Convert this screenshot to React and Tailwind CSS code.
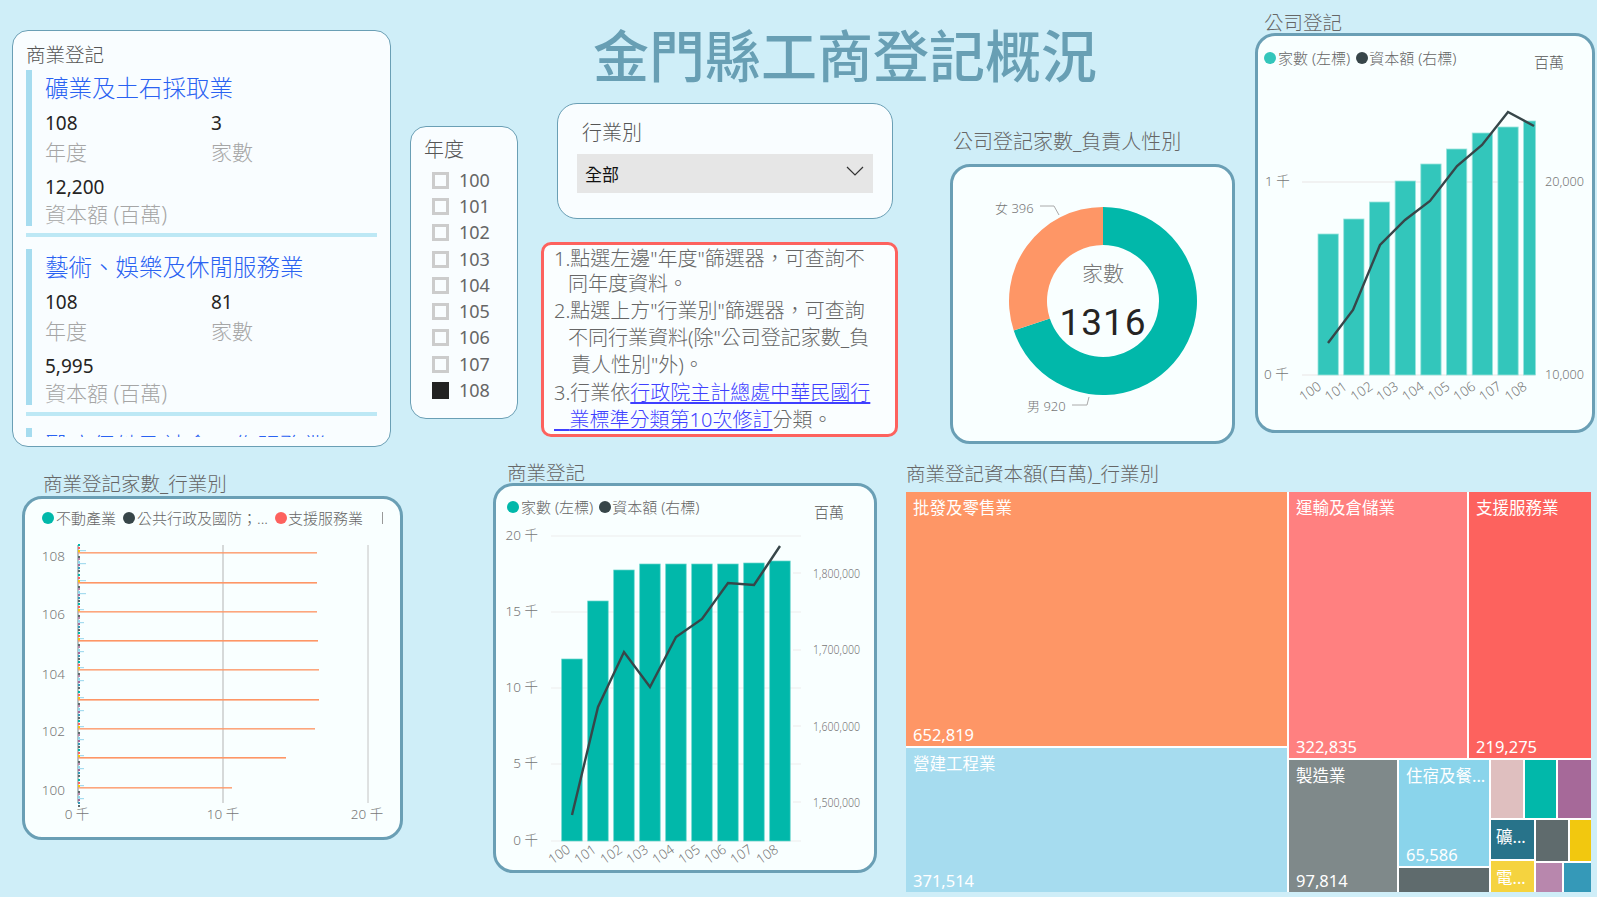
import React from "react";

const years = [100, 101, 102, 103, 104, 105, 106, 107, 108];

const Dot = ({ className }) => (
  <span className={`inline-block w-[12px] h-[12px] rounded-full shrink-0 ${className}`}></span>
);

const ComboLegend = ({ color }) => (
  <div className="flex items-center text-[15px] leading-[20px] text-[#666666] h-[20px]">
    <Dot className={color} />
    <span className="ml-[2px]">家數 (左標)</span>
    <Dot className="bg-[#374649] ml-[6px]" />
    <span className="ml-[1px]">資本額 (右標)</span>
  </div>
);

const AxisText = ({ x, y, anchor = "start", size = 13.5, width, children }) => (
  <text
    x={x}
    y={y}
    textAnchor={anchor}
    dominantBaseline="central"
    fontSize={size}
    fill="#777777"
    textLength={width}
    lengthAdjust={width ? "spacingAndGlyphs" : undefined}
  >
    {children}
  </text>
);

const XLabels = ({ startX, step, y }) =>
  years.map((yr, i) => (
    <text
      key={yr}
      x={startX + i * step}
      y={y}
      textAnchor="middle"
      dominantBaseline="central"
      fontSize={13.5}
      fill="#777777"
      transform={`rotate(-35 ${startX + i * step} ${y})`}
    >
      {yr}
    </text>
  ));

const RecordCard = ({ name, count, capital }) => (
  <div>
    <div className="flex border-l-[6px] border-[#A6DCEF] h-[156px]">
      <div className="pl-[13px] w-full">
        <div className="text-[23.5px] leading-[36px] text-[#2A62F2] whitespace-nowrap">{name}</div>
        <div className="flex mt-[4px]">
          <div className="w-[166px]">
            <div className="text-[19px] leading-[27px] text-[#252423] font-normal">108</div>
            <div className="text-[21px] leading-[30px] text-[#A6A6A6]">年度</div>
          </div>
          <div>
            <div className="text-[19px] leading-[27px] text-[#252423] font-normal">{count}</div>
            <div className="text-[21px] leading-[30px] text-[#A6A6A6]">家數</div>
          </div>
        </div>
        <div className="text-[19px] leading-[27px] text-[#252423] font-normal mt-[7px]">{capital}</div>
        <div className="text-[21px] leading-[27px] text-[#A6A6A6] whitespace-nowrap">資本額 (百萬)</div>
      </div>
    </div>
    <div className="h-[4px] bg-[#BDE8F5] mt-[7px] mb-[12px]"></div>
  </div>
);

const RecordList = () => (
  <div className="w-[379px] h-[417px] mt-[30px] ml-[12px] rounded-[16px] border border-[#6A9FB5] bg-[#F9FDFF] px-[13px] pt-[10px] shrink-0">
    <div className="text-[19.5px] leading-[28px] text-[#555555]">商業登記</div>
    <div className="h-[367px] overflow-hidden mt-[1px]">
      <RecordCard name="礦業及土石採取業" count="3" capital="12,200" />
      <RecordCard name="藝術、娛樂及休閒服務業" count="81" capital="5,995" />
      <RecordCard name="醫療保健及社會工作服務業" count="8" capital="1,200" />
    </div>
  </div>
);

const YearSlicer = () => (
  <div className="w-[108px] h-[293px] mt-[126px] ml-[19px] rounded-[16px] border border-[#6A9FB5] bg-[#F9FDFF] pl-[13px] pt-[9px] shrink-0">
    <div className="text-[20px] leading-[28px] text-[#555555]">年度</div>
    <div className="flex flex-col mt-[3px]">
      {years.map((yr) => (
        <div key={yr} className="flex items-center h-[26.3px] pl-[8px]">
          <span
            className={
              yr === 108
                ? "w-[17px] h-[17px] bg-[#222222]"
                : "w-[17px] h-[17px] border-[3px] border-[#CCCCCC]"
            }
          ></span>
          <span className="ml-[10px] text-[18px] text-[#666666] font-normal">{yr}</span>
        </div>
      ))}
    </div>
  </div>
);

const IndustrySlicer = () => (
  <div className="w-[336px] h-[116px] ml-[16px] rounded-[20px] border border-[#6A9FB5] bg-[#F9FDFF] px-[19px] pt-[14px]">
    <div className="pl-[5px] text-[20px] leading-[30px] text-[#555555]">行業別</div>
    <div className="flex items-center justify-between h-[39px] mt-[6px] bg-[#E6E6E6] pl-[8px] pr-[9px]">
      <span className="text-[17px] text-[#111111] mt-[3px] font-normal">全部</span>
      <svg width="18" height="12" viewBox="0 0 18 12" className="mb-[6px]">
        <path d="M1 2 L9 10 L17 2" fill="none" stroke="#333333" strokeWidth="1.2" />
      </svg>
    </div>
  </div>
);

const NoteLink = ({ children }) => (
  <span className="text-[#3F3FFF] underline underline-offset-[2px] whitespace-pre">{children}</span>
);

const NoteBox = () => (
  <div className="w-[357px] h-[195px] mt-[23px] rounded-[10px] border-[3px] border-[#FD625E] bg-[#FAFEFF] pl-[10px] pt-[1px] text-[20px] text-[#666666] whitespace-nowrap">
    <div className="h-[25px] leading-[25px]">{'1.點選左邊"年度"篩選器\uFF0C可查詢不'}</div>
    <div className="h-[26px] leading-[26px] pl-[14px]">同年度資料。</div>
    <div className="h-[27px] leading-[27px]">{'2.點選上方"行業別"篩選器\uFF0C可查詢'}</div>
    <div className="h-[27px] leading-[27px] pl-[14px]">不同行業資料(除"公司登記家數_負</div>
    <div className="h-[28px] leading-[28px] pl-[17px]">責人性別"外)。</div>
    <div className="h-[27px] leading-[27px]">
      3.行業依<NoteLink>行政院主計總處中華民國行</NoteLink>
    </div>
    <div className="h-[27px] leading-[27px]">
      <NoteLink>{"   "}業標準分類第10次修訂</NoteLink>分類。
    </div>
  </div>
);

// Ring segment between two clockwise angles, measured from twelve o'clock
const ringPath = (from, to) => {
  const pt = (deg, r) => {
    const a = ((deg - 90) * Math.PI) / 180;
    return `${1103 + r * Math.cos(a)} ${301 + r * Math.sin(a)}`;
  };
  const large = to - from > 180 ? 1 : 0;
  return `M${pt(from, 94)} A94 94 0 ${large} 1 ${pt(to, 94)} L${pt(to, 56)} A56 56 0 ${large} 0 ${pt(from, 56)} Z`;
};

const GenderDonut = () => (
  <div className="w-[285px] mt-[27px]">
    <div className="h-[34px] pl-[3px] text-[20px] leading-[24px] text-[#666666] whitespace-nowrap">
      公司登記家數_負責人性別
    </div>
    <div className="h-[280px] rounded-[20px] border-[3px] border-[#6A9FB5] bg-[#F9FFFF]">
      <svg viewBox="953 167 279 274" className="block w-[279px] h-[274px]">
        <path d={ringPath(0, 251.7)} fill="#01B8AA" />
        <path d={ringPath(251.7, 360)} fill="#FE9666" />
        <AxisText x={995} y={208} size={13}>女 396</AxisText>
        <path d="M1040 206 H1054 L1059 215" fill="none" stroke="#AAAAAA" strokeWidth="1" />
        <AxisText x={1027} y={406} size={13}>男 920</AxisText>
        <path d="M1072 405 H1087 L1089 397" fill="none" stroke="#AAAAAA" strokeWidth="1" />
        <text x="1103" y="273" textAnchor="middle" dominantBaseline="central" fontSize="21" fill="#777777">家數</text>
        <text x="1103" y="322" textAnchor="middle" dominantBaseline="central" fontSize="37" fontFamily="Roboto" fontWeight="400" letterSpacing="1" fill="#252423">1316</text>
      </svg>
    </div>
  </div>
);

const companyBars = [234, 219, 202, 181, 164, 149, 133, 127, 121];
const companyLine = "1328,343 1353,310 1380,245 1405,220 1430,201 1457,166 1482,145 1508,112 1534,126";

const CompanyChart = () => (
  <div className="w-[340px] ml-[20px] mt-[12px] shrink-0">
    <div className="h-[21px] pl-[9px] text-[19.5px] leading-[22px] text-[#666666] whitespace-nowrap">公司登記</div>
    <div className="h-[400px] rounded-[20px] border-[3px] border-[#6A9FB5] bg-[#F9FFFF]">
      <div className="flex justify-between h-[44px] pl-[6px] pr-[28px] pt-[12px]">
        <ComboLegend color="bg-[#33C6BB]" />
        <span className="text-[15px] leading-[20px] text-[#555555] mt-[4px]">百萬</span>
      </div>
      <svg viewBox="1258 80 334 350" className="block w-[334px] h-[350px]">
        <line x1="1302" x2="1535" y1="182" y2="182" stroke="#EEEEEE" strokeWidth="1.5" />
        <line x1="1302" x2="1535" y1="375" y2="375" stroke="#EEEEEE" strokeWidth="1.5" />
        {companyBars.map((top, i) => (
          <rect
            key={i}
            x={1318 + i * 25.7}
            y={top}
            width={i === 8 ? 12 : 20.3}
            height={375 - top}
            fill="#33C6BB"
            stroke="#99E3DD"
            strokeWidth="0.8"
          />
        ))}
        <polyline points={companyLine} fill="none" stroke="#374649" strokeWidth="2.4" />
        <AxisText x={1265} y={181}>1 千</AxisText>
        <AxisText x={1264} y={374}>0 千</AxisText>
        <AxisText x={1584} y={181} anchor="end" width={39}>20,000</AxisText>
        <AxisText x={1584} y={374} anchor="end" width={39}>10,000</AxisText>
        <XLabels startX={1310} step={25.7} y={391} />
      </svg>
    </div>
  </div>
);

const rowYs = [553, 583, 612, 641, 670, 700, 729, 758, 788];
const rowEnds = [317, 317, 317, 318, 319, 319, 315, 286, 232];
const tickColors = [
  [-9, "#01B8AA"], [-6, "#FD625E"], [-3, "#F2C80F"], [3, "#5F6B6D"], [5, "#B887AD"],
  [8, "#8AD4EB"], [11, "#A66999"], [14, "#3599B8"], [17, "#5F6B6D"],
];

const IndustryBars = () => (
  <div className="w-[381px] ml-[22px] mt-[13px] shrink-0">
    <div className="h-[23px] pl-[21px] text-[19.5px] leading-[22px] text-[#666666] whitespace-nowrap">商業登記家數_行業別</div>
    <div className="h-[344px] rounded-[20px] border-[3px] border-[#6A9FB5] bg-[#F9FFFF]">
      <div className="flex items-center h-[38px] pl-[17px] text-[15px] leading-[20px] text-[#666666] whitespace-nowrap">
        <Dot className="bg-[#01B8AA]" />
        <span className="ml-[2px] w-[67px]">不動產業</span>
        <Dot className="bg-[#374649]" />
        <span className="ml-[2px] w-[138px]">{"公共行政及國防\uFF1B..."}</span>
        <Dot className="bg-[#FD625E]" />
        <span className="ml-[1px]">支援服務業</span>
        <span className="ml-[19px] w-px h-[12px] bg-[#999999]"></span>
      </div>
      <svg viewBox="25 537 375 300" className="block w-[375px] h-[300px]">
        <line x1="223" x2="223" y1="545" y2="803" stroke="#B3B3B3" strokeWidth="1" />
        <line x1="368" x2="368" y1="545" y2="803" stroke="#C4C4C4" strokeWidth="1" />
        <line x1="78" x2="78" y1="545" y2="803" stroke="#8A9A9C" strokeWidth="1.2" />
        {rowYs.map((y, i) => (
          <g key={y}>
            <rect x="78" y={y - 1} width={rowEnds[i] - 78} height="1.6" fill="#FE9666" opacity={i % 2 ? 1 : 0.85} />
            <rect x="78" y={y - 3} width={i < 2 ? 8 : 6} height="1.2" fill="#A6DCEF" />
            <rect x="78" y={y + 10} width={i < 2 ? 8 : 6} height="1.2" fill="#A6DCEF" />
            {tickColors.map(([dy, c]) => (
              <rect key={dy} x="78" y={y + dy} width="2" height="2" fill={c} />
            ))}
          </g>
        ))}
        <AxisText x={65} y={555.5} anchor="end">108</AxisText>
        <AxisText x={65} y={614} anchor="end">106</AxisText>
        <AxisText x={65} y={673.5} anchor="end">104</AxisText>
        <AxisText x={65} y={731} anchor="end">102</AxisText>
        <AxisText x={65} y={790} anchor="end">100</AxisText>
        <AxisText x={77} y={814} anchor="middle">0 千</AxisText>
        <AxisText x={223} y={814} anchor="middle">10 千</AxisText>
        <AxisText x={367} y={814} anchor="middle">20 千</AxisText>
      </svg>
    </div>
  </div>
);

const mainBars = [659, 601, 570, 564, 564, 564, 564, 563, 561];
const mainLine = "572,815 598,707 624,652 650,687 676,637 702,619 728,583 754,585 780,546";

const MainChart = () => (
  <div className="w-[384px] ml-[90px] mt-[2px] shrink-0">
    <div className="h-[21px] pl-[14px] text-[19.5px] leading-[22px] text-[#666666] whitespace-nowrap">商業登記</div>
    <div className="h-[390px] rounded-[20px] border-[3px] border-[#6A9FB5] bg-[#F9FFFF]">
      <div className="flex justify-between h-[36px] pl-[11px] pr-[30px] pt-[11px]">
        <ComboLegend color="bg-[#01B8AA]" />
        <span className="text-[15px] leading-[20px] text-[#555555] mt-[5px]">百萬</span>
      </div>
      <svg viewBox="496 522 378 348" className="block w-[378px] h-[348px]">
        {[536, 612, 688, 764, 841].map((y) => (
          <line key={y} x1="551" x2="801" y1={y} y2={y} stroke="#EEEEEE" strokeWidth="1.2" />
        ))}
        {[573, 650, 726, 802].map((y) => (
          <line key={y} x1="793" x2="801" y1={y} y2={y} stroke="#EEEEEE" strokeWidth="1.2" />
        ))}
        {mainBars.map((top, i) => (
          <rect
            key={i}
            x={561.7 + i * 26}
            y={top}
            width="20.5"
            height={841 - top}
            fill="#01B8AA"
            stroke="#66D4CC"
            strokeWidth="0.7"
          />
        ))}
        <polyline points={mainLine} fill="none" stroke="#374649" strokeWidth="2.4" />
        <AxisText x={538} y={534.5} anchor="end">20 千</AxisText>
        <AxisText x={538} y={610.5} anchor="end">15 千</AxisText>
        <AxisText x={538} y={687} anchor="end">10 千</AxisText>
        <AxisText x={538} y={763} anchor="end">5 千</AxisText>
        <AxisText x={538} y={839.5} anchor="end">0 千</AxisText>
        {["1,800,000", "1,700,000", "1,600,000", "1,500,000"].map((t, i) => (
          <AxisText key={t} x={813} y={573 + i * 76.3} size={13} width={47}>{t}</AxisText>
        ))}
        <XLabels startX={559} step={26} y={854} />
      </svg>
    </div>
  </div>
);

// One labelled treemap tile: name on top, value at the bottom
const Tile = ({ className, name, value, small }) => (
  <div className={`flex flex-col justify-between text-white font-normal overflow-hidden whitespace-nowrap ${small ? "pl-[5px] pt-[6px]" : "px-[7px] pt-[5px]"} ${className}`}>
    <span className="text-[16.5px] leading-[22px]">{name}</span>
    {value && <span className="text-[16.5px] leading-[22px]">{value}</span>}
  </div>
);

const Treemap = () => (
  <div className="w-[685px] ml-[29px] mt-[3px] shrink-0">
    <div className="h-[29px] text-[19.5px] leading-[22px] text-[#666666] whitespace-nowrap">商業登記資本額(百萬)_行業別</div>
    <div className="flex gap-[2px] h-[400px] bg-[#FFFFFF]">
      <div className="flex flex-col gap-[2px] w-[381px]">
        <Tile className="h-[254px] bg-[#FE9666]" name="批發及零售業" value="652,819" />
        <Tile className="flex-1 bg-[#A6DCEF]" name="營建工程業" value="371,514" />
      </div>
      <div className="flex flex-col gap-[2px] flex-1">
        <div className="flex gap-[2px] h-[266px]">
          <Tile className="w-[178px] bg-[#FF8080]" name="運輸及倉儲業" value="322,835" />
          <Tile className="flex-1 bg-[#FD625E]" name="支援服務業" value="219,275" />
        </div>
        <div className="flex gap-[2px] flex-1">
          <Tile className="w-[108px] bg-[#7F898A]" name="製造業" value="97,814" />
          <div className="flex flex-col gap-[2px] w-[90px]">
            <Tile className="h-[106px] bg-[#8AD4EB]" name="住宿及餐..." value="65,586" />
            <div className="flex-1 bg-[#5F6B6D]"></div>
          </div>
          <div className="flex flex-col gap-[2px] flex-1">
            <div className="flex gap-[2px] h-[58px]">
              <div className="w-[32px] bg-[#DFBFBF]"></div>
              <div className="w-[31px] bg-[#01B8AA]"></div>
              <div className="flex-1 bg-[#A66999]"></div>
            </div>
            <div className="flex gap-[2px] flex-1">
              <div className="flex flex-col gap-[2px] w-[43px]">
                <Tile small className="h-[39px] bg-[#28738A]" name="礦..." />
                <Tile small className="flex-1 bg-[#F5D33F]" name="電..." />
              </div>
              <div className="flex flex-col gap-[2px] flex-1">
                <div className="flex gap-[2px] h-[41px]">
                  <div className="w-[32px] bg-[#5F6B6D]"></div>
                  <div className="flex-1 bg-[#F2C80F]"></div>
                </div>
                <div className="flex gap-[2px] flex-1">
                  <div className="w-[26px] bg-[#B887AD]"></div>
                  <div className="flex-1 bg-[#3599B8]"></div>
                </div>
              </div>
            </div>
          </div>
        </div>
      </div>
    </div>
  </div>
);

export default function App() {
  return (
    <div className="w-[1597px] h-[897px] overflow-hidden bg-[#CFEEF8] font-light font-['Noto_Sans','Noto_Sans_CJK_TC',sans-serif]">
      {/* Upper half: record list, slicers, donut and company chart */}
      <div className="flex items-start h-[460px]">
        <RecordList />
        <YearSlicer />
        <div className="w-[694px] ml-[23px] shrink-0">
          <div className="h-[103px] pl-[52px] pt-[25px] text-[56px] leading-[60px] text-[#689FB4] font-medium whitespace-nowrap">
            金門縣工商登記概況
          </div>
          <div className="flex gap-[52px]">
            <div className="w-[357px]">
              <IndustrySlicer />
              <NoteBox />
            </div>
            <GenderDonut />
          </div>
        </div>
        <CompanyChart />
      </div>
      {/* Lower half: bar charts and treemap */}
      <div className="flex items-start">
        <IndustryBars />
        <MainChart />
        <Treemap />
      </div>
    </div>
  );
}
